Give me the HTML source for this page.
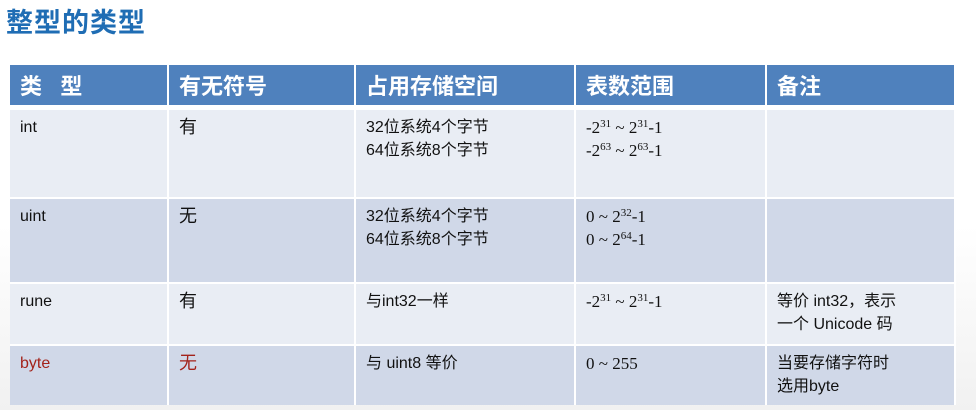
<!DOCTYPE html>
<html><head><meta charset="utf-8"><style>
body{margin:0;width:976px;height:410px;overflow:hidden;background:linear-gradient(180deg,#fff 0%,#fff 55%,#f1f1f1 100%);font-family:"Liberation Sans","Noto Sans CJK SC",sans-serif;position:relative}
.t{position:absolute;left:6px;top:1px;font-size:27px;font-weight:bold;color:#1f6db4;letter-spacing:1px}
table{position:absolute;left:10px;top:65px;border-collapse:collapse;table-layout:fixed;width:945px}
th{background:#4f81bd;color:#fff;font-size:22px;font-weight:bold;text-align:left;padding:4px 0 0 10px;height:36px;border-right:2px solid #fff;vertical-align:top}
td{font-size:16px;color:#111;vertical-align:top;padding:6px 0 0 10px;border-right:2px solid #fff;border-top:2px solid #fff;line-height:23px}
tr.a td{background:#e9edf4}tr.b td{background:#d0d8e8}
.s{font-family:"Liberation Serif","Noto Sans CJK SC",serif;font-size:17px}
.c{font-size:18px}
sup{font-size:11px;vertical-align:6px;line-height:0}
.r{color:#a3231b}
</style></head><body>
<div class="t">整型的类型</div>
<table>
<colgroup><col style="width:158px"><col style="width:187px"><col style="width:220px"><col style="width:191px"><col style="width:189px"></colgroup>
<tr><th>类&nbsp;&nbsp;&nbsp;型</th><th>有无符号</th><th>占用存储空间</th><th>表数范围</th><th>备注</th></tr>
<tr class="a" style="height:90px"><td style="border-top:5px solid #fff">int</td><td class="c" style="border-top:5px solid #fff">有</td><td style="border-top:5px solid #fff">32位系统4个字节<br>64位系统8个字节</td><td class="s" style="border-top:5px solid #fff">-2<sup>31</sup> ~ 2<sup>31</sup>-1<br>-2<sup>63</sup> ~ 2<sup>63</sup>-1</td><td style="border-top:5px solid #fff"></td></tr>
<tr class="b" style="height:85px"><td>uint</td><td class="c">无</td><td>32位系统4个字节<br>64位系统8个字节</td><td class="s">0 ~ 2<sup>32</sup>-1<br>0 ~ 2<sup>64</sup>-1</td><td></td></tr>
<tr class="a" style="height:62px"><td>rune</td><td class="c">有</td><td>与int32一样</td><td class="s">-2<sup>31</sup> ~ 2<sup>31</sup>-1</td><td>等价 int32，表示<br>一个 Unicode 码</td></tr>
<tr class="b" style="height:60px"><td class="r">byte</td><td class="r c">无</td><td>与 uint8 等价</td><td class="s">0 ~ 255</td><td>当要存储字符时<br>选用byte</td></tr>
</table>
</body></html>
